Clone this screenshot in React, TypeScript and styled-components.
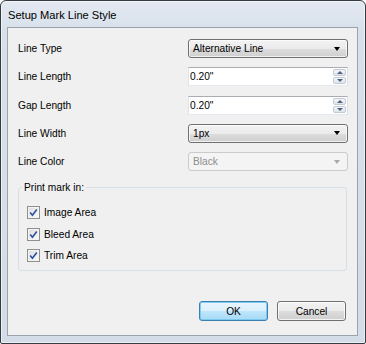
import React from 'react';
import styled, { createGlobalStyle } from 'styled-components';

const Global = createGlobalStyle`
  html, body { margin: 0; padding: 0; background: #ffffff; }
  body { font-family: "Liberation Sans", Arial, sans-serif; }
  * { box-sizing: border-box; }
`;

const Window = styled.div`
  width: 366px;
  height: 344px;
  display: flex;
  flex-direction: column;
  border: 1px solid #363b42;
  border-radius: 6px 6px 2px 2px;
  background: linear-gradient(#e3e9f1 0px, #d8e1eb 28px, #d3dce7 100%);
  box-shadow: inset 0 0 0 1px rgba(255, 255, 255, 0.55);
  padding: 0 7px 7px 6px;
`;

const TitleBar = styled.div`
  height: 26px;
  display: flex;
  align-items: center;
  padding-left: 1px;
  padding-top: 1px;
  font-size: 11.1px;
  color: #000;
`;

const Client = styled.div`
  flex: 1;
  display: flex;
  flex-direction: column;
  border: 1px solid #9ba4ae;
  background: #f0f0f0;
  padding: 11px 9px 14px 9px;
`;

const Form = styled.div`
  display: grid;
  grid-template-columns: 1fr 160px;
  grid-auto-rows: 19px;
  row-gap: 9.25px;
  align-items: center;
`;

const Label = styled.div`
  font-size: 10.2px;
  color: #000;
  padding-left: 1px;
`;

const Select = styled.div<{ disabled?: boolean }>`
  height: 19px;
  display: flex;
  align-items: center;
  justify-content: space-between;
  padding: 0 7px 0 4px;
  border: 1px solid ${p => (p.disabled ? '#c9cbcd' : '#707070')};
  border-radius: 3px;
  font-size: 10.2px;
  color: ${p => (p.disabled ? '#8e8e8e' : '#000')};
  background: ${p =>
    p.disabled
      ? '#f4f4f4'
      : 'linear-gradient(#f3f3f3 0%, #ebebeb 50%, #dddddd 51%, #cfcfcf 100%)'};
  box-shadow: ${p => (p.disabled ? 'none' : 'inset 0 0 0 1px rgba(255,255,255,0.7)')};
`;

const Arrow = styled.span<{ disabled?: boolean }>`
  width: 0;
  height: 0;
  border-left: 3.5px solid transparent;
  border-right: 3.5px solid transparent;
  border-top: 4px solid ${p => (p.disabled ? '#a9a9a9' : '#000')};
`;

const Spin = styled.div`
  height: 19px;
  display: flex;
  align-items: stretch;
  border: 1px solid #abadb3;
  border-bottom-color: #e3e9ef;
  border-left-color: #e2e3ea;
  border-right-color: #dbdfe6;
  background: #fff;
`;

const SpinText = styled.div`
  flex: 1;
  display: flex;
  align-items: center;
  padding-left: 1px;
  font-size: 10.2px;
  color: #000;
`;

const SpinButtons = styled.div`
  width: 13px;
  display: flex;
  flex-direction: column;
  gap: 1px;
  margin: 1px 1px 1px 0;
`;

const SpinBtn = styled.div<{ down?: boolean }>`
  flex: 1;
  display: flex;
  align-items: center;
  justify-content: center;
  border: 1px solid #c3cad3;
  border-radius: 2px;
  background: linear-gradient(#f4f6f9, #dfe4ea);
  &::after {
    content: '';
    width: 0;
    height: 0;
    border-left: 3px solid transparent;
    border-right: 3px solid transparent;
    ${p =>
      p.down
        ? 'border-top: 3px solid #4d6185;'
        : 'border-bottom: 3px solid #4d6185;'}
  }
`;

const Group = styled.fieldset`
  margin: 11px 0 0 1px;
  width: 329px;
  height: 89px;
  border: 1px solid #d5dfe5;
  border-radius: 3px;
  padding: 13px 8px 0 8px;
  display: flex;
  flex-direction: column;
  gap: 8.5px;
`;

const Legend = styled.legend`
  font-size: 10.2px;
  color: #000;
  padding: 0 2px;
  margin-left: -5px;
`;

const CheckRow = styled.label`
  display: flex;
  align-items: center;
  gap: 4px;
  height: 13px;
  font-size: 10.2px;
  color: #000;
`;

const Box = styled.span`
  width: 13px;
  height: 13px;
  border: 1px solid #8e8f8f;
  background: linear-gradient(135deg, #dcdcdc, #fbfbfb);
  display: flex;
  align-items: center;
  justify-content: center;
  box-shadow: inset 0 0 0 1px #f4f4f4;
`;

const Spacer = styled.div`
  flex: 1;
`;

const Buttons = styled.div`
  display: flex;
  justify-content: flex-end;
  gap: 9px;
  padding-right: 2px;
`;

const Button = styled.div<{ primary?: boolean }>`
  width: 69px;
  height: 20px;
  display: flex;
  align-items: center;
  justify-content: center;
  border: 1px solid ${p => (p.primary ? '#3c7fb1' : '#707070')};
  border-radius: 3px;
  font-size: 10.2px;
  color: #000;
  background: ${p =>
    p.primary
      ? 'linear-gradient(#eaf6fd 0%, #d9f0fc 50%, #bee6fd 51%, #a7d9f5 100%)'
      : 'linear-gradient(#f2f2f2 0%, #ebebeb 50%, #dddddd 51%, #cfcfcf 100%)'};
  box-shadow: ${p =>
    p.primary
      ? 'inset 0 0 0 1px rgba(120, 200, 240, 0.9)'
      : 'inset 0 0 0 1px rgba(255,255,255,0.75)'};
`;

function Check() {
  return (
    <Box>
      <svg width="9" height="9" viewBox="0 0 9 9">
        <path d="M1.2 4.6 L3.4 7.2 L7.8 1.4" fill="none" stroke="#2a4fa5" strokeWidth="1.6" />
      </svg>
    </Box>
  );
}

function Spinner({ value }: { value: string }) {
  return (
    <Spin>
      <SpinText>{value}</SpinText>
      <SpinButtons>
        <SpinBtn />
        <SpinBtn down />
      </SpinButtons>
    </Spin>
  );
}

export default function App() {
  return (
    <>
      <Global />
      <Window>
        <TitleBar>Setup Mark Line Style</TitleBar>
        <Client>
          <Form>
            <Label>Line Type</Label>
            <Select>
              Alternative Line
              <Arrow />
            </Select>
            <Label>Line Length</Label>
            <Spinner value={'0.20"'} />
            <Label>Gap Length</Label>
            <Spinner value={'0.20"'} />
            <Label>Line Width</Label>
            <Select>
              1px
              <Arrow />
            </Select>
            <Label>Line Color</Label>
            <Select disabled>
              Black
              <Arrow disabled />
            </Select>
          </Form>
          <Group>
            <Legend>Print mark in:</Legend>
            <CheckRow><Check />Image Area</CheckRow>
            <CheckRow><Check />Bleed Area</CheckRow>
            <CheckRow><Check />Trim Area</CheckRow>
          </Group>
          <Spacer />
          <Buttons>
            <Button primary>OK</Button>
            <Button>Cancel</Button>
          </Buttons>
        </Client>
      </Window>
    </>
  );
}
